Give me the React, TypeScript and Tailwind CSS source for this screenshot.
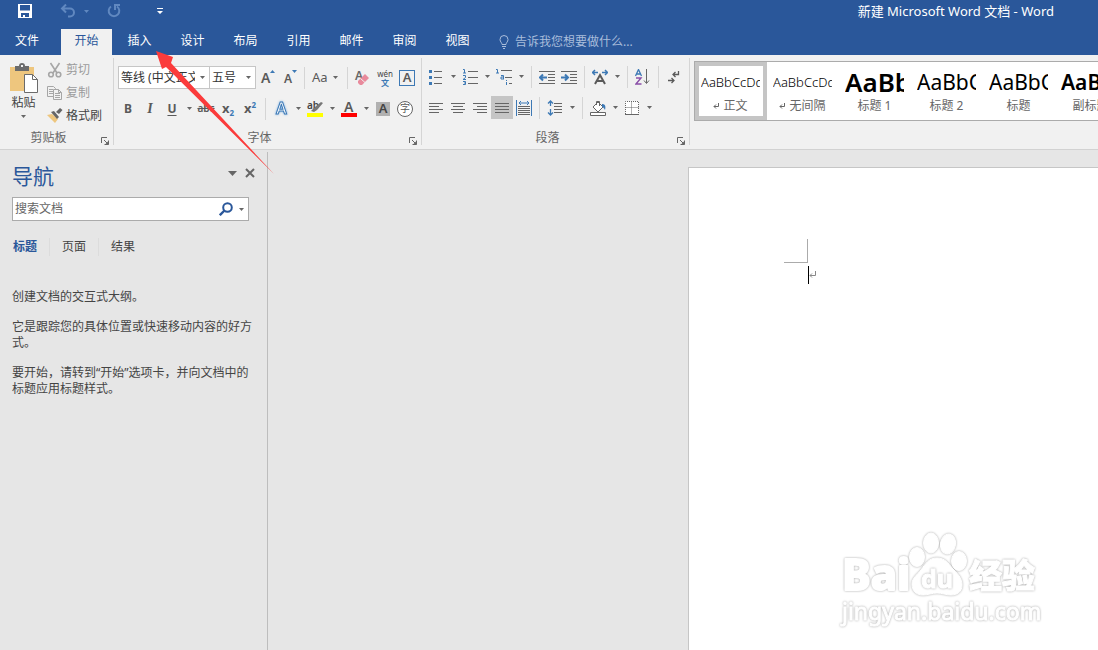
import type { ReactNode } from 'react'

const GREY = '#666666'
const BLUE = '#3d79b5'

const TABS = ['开始', '插入', '设计', '布局', '引用', '邮件', '审阅', '视图']

const STYLES = [
  { sample: 'AaBbCcDd', name: '正文', mark: true, look: 'text-[13px] font-light' },
  { sample: 'AaBbCcDd', name: '无间隔', mark: true, look: 'text-[13px] font-light' },
  { sample: 'AaBb', name: '标题 1', mark: false, look: 'text-[26px] font-semibold' },
  { sample: 'AaBbC', name: '标题 2', mark: false, look: 'text-[21px]' },
  { sample: 'AaBbC', name: '标题', mark: false, look: 'text-[21px]' },
  { sample: 'AaBbC', name: '副标题', mark: false, look: 'text-[21px] font-semibold' },
]

function Caret() {
  return (
    <svg width="5" height="3" viewBox="0 0 5 3" className="shrink-0">
      <path d="M0 0h5L2.5 3z" fill={GREY} />
    </svg>
  )
}

function Tool({ label, children, menu, active }: { label: string; children: ReactNode; menu?: boolean; active?: boolean }) {
  return (
    <button
      aria-label={label}
      className={active ? 'flex h-[23px] items-center bg-[#c5c5c5]' : 'flex h-[23px] items-center'}
    >
      <span className="flex w-[22px] items-center justify-center">{children}</span>
      {menu && (
        <span className="flex w-3 justify-center">
          <Caret />
        </span>
      )}
    </button>
  )
}

function Divider() {
  return <span className="mx-1 h-[22px] w-px bg-[#d5d5d5]" />
}

function Group({ title, children, className }: { title: string; children: ReactNode; className?: string }) {
  return (
    <section className="mb-1 mt-[3px] flex shrink-0 flex-col border-r border-[#d5d5d5]">
      <div className={className}>{children}</div>
      <div className="mt-auto flex h-[14px] items-center">
        <h2 className="flex-1 text-center text-[#666]">{title}</h2>
        <button aria-label={title + '选项'} className="flex h-full w-4 items-end justify-end pr-1">
          <svg width="8" height="8" viewBox="0 0 8 8" fill="none" stroke={GREY}>
            <path d="M.5 6V.5H6M3 3l3 3M7.5 3.500v4h-4" />
            <path d="M7.500 4v3.500H4z" fill={GREY} stroke="none" />
          </svg>
        </button>
      </div>
    </section>
  )
}

function Lines({ d, children }: { d: string; children?: ReactNode }) {
  return (
    <svg width="16" height="16" viewBox="0 0 16 16" fill="none" stroke={GREY}>
      <path d={d} />
      {children}
    </svg>
  )
}

function TitleBar() {
  return (
    <div className="flex h-[29px] items-start justify-between pl-[18px] pr-11 text-white">
      <div className="flex h-[22px] items-center">
        <button aria-label="保存">
          <svg width="14" height="14" viewBox="0 0 14 14">
            <path fillRule="evenodd" fill="#fff" d="M0 0h14v14H0zM2 1v5.500h10V1zM3 9v4h2v-2h2v2h4V9z" />
          </svg>
        </button>
        <button aria-label="撤消" className="ml-7 flex items-center gap-2">
          <svg width="16" height="14" viewBox="0 0 16 14" fill="none" stroke="#6088c0" strokeWidth="2">
            <path d="M6 .5L2 4.500l4 4M2 4.500h8a4 4 0 0 1 0 8H8" />
          </svg>
          <svg width="5" height="3" viewBox="0 0 5 3">
            <path d="M0 0h5L2.500 3z" fill="#6088c0" />
          </svg>
        </button>
        <button aria-label="重复" className="ml-[18px]">
          <svg width="14" height="14" viewBox="0 0 14 14" fill="none" stroke="#6088c0" strokeWidth="2">
            <path d="M4 2.500A5.300 5.300 0 1 0 10 2.500M8 6V1h5" />
          </svg>
        </button>
        <button aria-label="自定义快速访问工具栏" className="ml-9">
          <svg width="6" height="6" viewBox="0 0 6 6" fill="#fff">
            <path d="M0 0h6v1H0zM0 3h6L3 6z" />
          </svg>
        </button>
      </div>
      <h1 className="text-[13px] leading-[23px]">新建 Microsoft Word 文档 - Word</h1>
    </div>
  )
}

function TabBar() {
  return (
    <nav className="flex h-[26px] text-white">
      <button className="pb-[2px] pl-[15px] pr-[21px]">文件</button>
      {TABS.map((tab, i) => (
        <button
          key={tab}
          className={i === 0 ? 'mx-px w-[51px] bg-[#f1f1f1] pb-[2px] text-[#2a579a]' : 'mx-px w-[51px] pb-[2px]'}
        >
          {tab}
        </button>
      ))}
      <label className="ml-[15px] flex items-center gap-[6px]">
        <svg width="10" height="14" viewBox="0 0 10 14" fill="none" stroke="#a9bddb">
          <path d="M3 9.500C3 7.500 1 7 1 4.500a4 4 0 0 1 8 0C9 7 7 7.500 7 9.500zM3 11.500h4M4 13.500h2" />
        </svg>
        <input
          aria-label="告诉我您想要做什么"
          placeholder="告诉我您想要做什么..."
          className="w-40 bg-transparent outline-none placeholder:text-[#a9bddb]"
        />
      </label>
    </nav>
  )
}

function ClipboardGroup() {
  return (
    <Group title="剪贴板" className="flex pl-2">
      <button className="flex w-[31px] flex-col items-center pt-[5px] text-[#444]">
        <svg width="28" height="30" viewBox="0 0 28 30">
          <path d="M0 4h24v24H0z" fill="#eec67e" />
          <path d="M5 3h4a3 3 0 0 1 6 0h4v5H5z" fill="#6b6b6b" />
          <path d="M11 2h2v2h-2z" fill="#f1f1f1" />
          <path d="M14.500 11.500h8l5 5v13h-13z" fill="#fff" stroke="#6b6b6b" />
          <path d="M22.500 11.500v5h5" fill="none" stroke="#6b6b6b" />
        </svg>
        <span className="mb-1 mt-[2px] leading-4">粘贴</span>
        <Caret />
      </button>
      <div className="flex w-[74px] flex-col pl-2 text-[#9b9b9b]">
        <button disabled className="flex h-[23px] items-center gap-[3px]">
          <svg width="16" height="16" viewBox="0 0 16 16" fill="none" stroke="#a6a6a6" strokeWidth="1.600">
            <path d="M3.500 1l6.500 10M12.500 1L6 11" />
            <circle cx="4" cy="12.500" r="2.300" />
            <circle cx="11.500" cy="12.500" r="2.300" />
          </svg>
          剪切
        </button>
        <button disabled className="flex h-[23px] items-center gap-[3px]">
          <svg width="16" height="16" viewBox="0 0 16 16" fill="#f1f1f1" stroke="#a6a6a6">
            <path d="M.5 1.500h6l2 2v8h-8zM2 4.500h4M2 6.500h4M2 8.500h4" />
            <path d="M6.500 4.500h5l3 3v7h-8zM11.500 4.500v3h3M8 8.500h5M8 10.500h5M8 12.500h5" />
          </svg>
          复制
        </button>
        <button className="flex h-[23px] items-center gap-[3px] whitespace-nowrap text-[#444]">
          <svg width="16" height="16" viewBox="0 0 16 16">
            <path d="M0 7l5-1 6 5-3 4z" fill="#eec67e" />
            <path d="M4 4l3-1 5 6-2 2zM9 4l4-4 2.500 2L12 6z" fill="#666" />
          </svg>
          格式刷
        </button>
      </div>
    </Group>
  )
}

function FontGroup() {
  return (
    <Group title="字体" className="px-[3px] text-[#5a5a5a]">
      <div className="mt-2 flex h-[23px] items-center">
        <label className="relative ml-px flex">
          <select aria-label="字体" className="h-[23px] w-[92px] appearance-none border border-[#c6c6c6] bg-white pl-[2px] pr-[14px] text-[#333]">
            <option>等线 (中文正文)</option>
          </select>
          <span className="pointer-events-none absolute right-[5px] top-[10px] flex">
            <Caret />
          </span>
        </label>
        <label className="relative -ml-px flex">
          <select aria-label="字号" className="h-[23px] w-[47px] appearance-none border border-[#c6c6c6] bg-white pl-[2px] pr-[14px] text-[#333]">
            <option>五号</option>
          </select>
          <span className="pointer-events-none absolute right-[5px] top-[10px] flex">
            <Caret />
          </span>
        </label>
        <Tool label="增大字号">
          <svg width="16" height="16" viewBox="0 0 16 16" className="overflow-visible">
            <text x="2" y="13" fontSize="14" fontWeight="600" fill="#5a5a5a">A</text>
            <path d="M11 3h5l-2.500-3z" fill={BLUE} />
          </svg>
        </Tool>
        <Tool label="减小字号">
          <svg width="16" height="16" viewBox="0 0 16 16" className="overflow-visible">
            <text x="3" y="13" fontSize="12" fontWeight="600" fill="#5a5a5a">A</text>
            <path d="M11 0h5l-2.500 3z" fill={BLUE} />
          </svg>
        </Tool>
        <Divider />
        <button aria-label="更改大小写" className="flex w-[34px] items-center gap-[5px] pl-[3px]">
          <span className="text-[13px]">Aa</span>
          <Caret />
        </button>
        <Divider />
        <Tool label="清除格式">
          <svg width="16" height="16" viewBox="0 0 16 16" className="overflow-visible">
            <text x="0" y="10" fontSize="12" fontWeight="600" fill="#666">A</text>
            <path d="M3 11l7-7 4 4-7 7H5l-2-2z" fill="#e88a9c" />
            <path d="M5.500 8.500l4.500 4" stroke="#f1f1f1" />
          </svg>
        </Tool>
        <Tool label="拼音指南">
          <span className="flex flex-col items-center text-[8px] leading-[9px] text-[#444]">
            <span>wén</span>
            <span className="font-bold text-[#3d79b5]">文</span>
          </span>
        </Tool>
        <Tool label="字符边框">
          <span className="flex size-4 items-center justify-center border border-[#3d79b5] text-[13px] font-semibold">A</span>
        </Tool>
      </div>
      <div className="mt-2 flex h-[23px] items-center">
        <Tool label="加粗"><b>B</b></Tool>
        <Tool label="倾斜"><i className="font-['Liberation_Serif'] text-[14px] font-bold">I</i></Tool>
        <Tool label="下划线" menu><b className="underline underline-offset-2">U</b></Tool>
        <Tool label="删除线"><span className="text-[10px] font-semibold line-through">abc</span></Tool>
        <Tool label="下标">
          <b className="text-[13px]">x</b>
          <span className="pt-2 text-[8px] font-bold text-[#3d79b5]">2</span>
        </Tool>
        <Tool label="上标">
          <b className="text-[13px]">x</b>
          <span className="pb-2 text-[8px] font-bold text-[#3d79b5]">2</span>
        </Tool>
        <Divider />
        <Tool label="文本效果" menu>
          <svg width="16" height="18" viewBox="0 0 16 18" className="overflow-visible">
            <text
              x="3"
              y="14"
              fontSize="16"
              fontWeight="600"
              fill="#fff"
              stroke={BLUE}
              className="drop-shadow-[0_0_1px_#7fb2e5]"
            >
              A
            </text>
          </svg>
        </Tool>
        <Tool label="突出显示" menu>
          <svg width="16" height="18" viewBox="0 0 16 18" className="overflow-visible">
            <text x="0" y="9" fontSize="10" fontWeight="600" fill="#444">ab</text>
            <path d="M4 11l4-4 6-5 2 1-6 7-3 2z" fill="#777" />
            <path d="M0 13h16v4H0z" fill="#ff0" />
          </svg>
        </Tool>
        <Tool label="字体颜色" menu>
          <svg width="16" height="18" viewBox="0 0 16 18" className="overflow-visible">
            <text x="3" y="12" fontSize="14" fontWeight="600" fill="#5a5a5a">A</text>
            <path d="M0 13h16v4H0z" fill="#f00" />
          </svg>
        </Tool>
        <Tool label="字符底纹">
          <span className="flex size-[14px] items-center justify-center bg-[#b1b1b1] text-[13px] font-semibold text-[#444]">A</span>
        </Tool>
        <Tool label="带圈字符">
          <span className="flex size-4 items-center justify-center rounded-full border border-[#666] bg-white text-[10px]">字</span>
        </Tool>
      </div>
    </Group>
  )
}

function ParagraphGroup() {
  return (
    <Group title="段落" className="pl-[3px] pr-1">
      <div className="mt-[7px] flex h-[23px] items-center">
        <Tool label="项目符号" menu>
          <Lines d="M6 2.500h8M6 8.500h8M6 14.500h8">
            <path d="M1 1h3v3H1zM1 7h3v3H1zM1 13h3v3H1z" fill={BLUE} stroke="none" />
          </Lines>
        </Tool>
        <Tool label="编号" menu>
          <Lines d="M6 2.500h10M6 8.500h10M6 14.500h10">
            <path d="M1 .5h1.500v3.500M1 4h3M1 6.500h2.500v2L1 10.500h3M1 12.500h2.500v3H1M2 14h2" stroke={BLUE} />
          </Lines>
        </Tool>
        <Tool label="多级列表" menu>
          <Lines d="M5 1.500h11M9 8.500h7M13 14.500h3">
            <path d="M0 .5h1.500V4M0 4h3M5 6.500h2.500V10M7.500 8H5v2h3M10.500 11v1M10.500 13v3" stroke={BLUE} />
          </Lines>
        </Tool>
        <Divider />
        <Tool label="减少缩进量">
          <Lines d="M0 2.500h16M9 5.500h7M9 8.500h7M9 11.500h7M0 14.500h16">
            <path d="M8 8.500H1M4 5.500l-3 3 3 3" stroke={BLUE} strokeWidth="2" />
          </Lines>
        </Tool>
        <Tool label="增加缩进量">
          <Lines d="M0 2.500h16M9 5.500h7M9 8.500h7M9 11.500h7M0 14.500h16">
            <path d="M0 8.500h6M4 5.500l3 3-3 3" stroke={BLUE} strokeWidth="2" />
          </Lines>
        </Tool>
        <Divider />
        <Tool label="中文版式" menu>
          <Lines d="">
            <path d="M3 15L8 6l5 9M5 12h6" stroke="#5a5a5a" strokeWidth="2" />
            <path d="M0 3.500h6M10 3.500h6M3 1L.5 3.500 3 6M13 1l2.500 2.500L13 6" stroke={BLUE} strokeWidth="1.500" />
          </Lines>
        </Tool>
        <Divider />
        <Tool label="排序">
          <Lines d="M11.500 0v14M9 11.500l2.500 3 2.500-3">
            <path d="M.5 7L3.500.5l3 6.500M1.500 5h4" stroke={BLUE} strokeWidth="1.300" />
            <path d="M1 9h5l-5 6h5.500" stroke="#8a4fa8" strokeWidth="1.400" />
          </Lines>
        </Tool>
        <Divider />
        <Tool label="显示编辑标记">
          <svg width="12" height="14" viewBox="0 0 12 14" fill="none" stroke="#5a5a5a" strokeWidth="1.300">
            <path d="M10.500 1v3.500H5M7.500 2L5 4.500 7.500 7M0 10.500h5.500M3.500 8L6 10.500 3.500 13" />
          </svg>
        </Tool>
      </div>
      <div className="mt-2 flex h-[23px] items-center">
        <Tool label="左对齐"><Lines d="M1 3.500h14M1 6.500h10M1 9.500h14M1 12.500h10" /></Tool>
        <Tool label="居中"><Lines d="M1 3.500h14M3 6.500h10M1 9.500h14M3 12.500h10" /></Tool>
        <Tool label="右对齐"><Lines d="M1 3.500h14M5 6.500h10M1 9.500h14M5 12.500h10" /></Tool>
        <Tool label="两端对齐" active><Lines d="M1 3.500h14M1 6.500h14M1 9.500h14M1 12.500h14" /></Tool>
        <Tool label="分散对齐">
          <Lines d="M2 6.500h12M2 8.500h12M2 10.500h12M2 12.500h12M2 14.500h12">
            <path d="M.5 0v16M15.500 0v16M3 3h10M5 1L3 3l2 2M11 1l2 2-2 2" stroke={BLUE} />
          </Lines>
        </Tool>
        <Divider />
        <Tool label="行距" menu>
          <Lines d="M7 3.500h8M7 6.500h8M7 9.500h8M7 12.500h8">
            <path d="M3.500 1v5M3.500 9v6M1 3.500L3.500 1 6 3.500M1 12.500L3.500 15 6 12.500" stroke={BLUE} strokeWidth="1.300" />
          </Lines>
        </Tool>
        <Divider />
        <Tool label="底纹" menu>
          <svg width="16" height="16" viewBox="0 0 16 16" fill="#fff" stroke={GREY}>
            <path d="M3 7l5-5 5 5-5 5zM6.500 5V1.500h3V6" />
            <path d="M12 4c3 0 4 2 3 6-1-2-2-3-3-3z" fill={BLUE} stroke="none" />
            <path d="M.5 12.500h15v3H.5z" />
          </svg>
        </Tool>
        <Tool label="边框" menu>
          <svg width="14" height="14" viewBox="0 0 14 14" fill="#fff" stroke={GREY}>
            <path d="M.5 13V.5h13V13M6.500 .5V13M.5 6.500h13" strokeDasharray="1 1" />
            <path d="M0 13.500h14" />
          </svg>
        </Tool>
      </div>
    </Group>
  )
}

function StyleGallery() {
  return (
    <div className="ml-1 mt-[6px] flex h-[60px] min-w-0 flex-1 overflow-hidden border border-r-0 border-[#ababab] bg-white">
      {STYLES.map((style, i) => (
        <button
          key={style.name}
          className={
            i === 0
              ? 'flex h-[58px] w-[72px] shrink-0 flex-col border-4 border-[#c5c5c5] pl-[2px] pr-[3px]'
              : 'flex h-[58px] w-[72px] shrink-0 flex-col border-4 border-transparent pl-[2px] pr-[3px]'
          }
        >
          <span className="flex h-8 w-full items-center overflow-hidden leading-8 text-black">
            <span className={style.look}>{style.sample}</span>
          </span>
          <span className="flex w-full items-center justify-center gap-1 whitespace-nowrap leading-4 text-[#666]">
            {style.mark && (
              <svg width="6" height="6" viewBox="0 0 6 6" fill="none" stroke="#666">
                <path d="M5.500 0v3.500H1M3 1.500l-2 2 2 2" />
              </svg>
            )}
            {style.name}
          </span>
        </button>
      ))}
    </div>
  )
}

function NavigationPane() {
  return (
    <aside className="mt-[2px] flex w-[268px] shrink-0 flex-col border-r border-[#bdbdbd] pl-3 text-[#444]">
      <div className="flex items-center justify-between pr-3 pt-[9px]">
        <h2 className="text-[21px] leading-[30px] text-[#2a579a]">导航</h2>
        <div className="flex items-center gap-2 pb-[6px]">
          <button aria-label="任务窗格选项">
            <svg width="9" height="5" viewBox="0 0 9 5">
              <path d="M0 0h9L4.500 5z" fill={GREY} />
            </svg>
          </button>
          <button aria-label="关闭">
            <svg width="10" height="10" viewBox="0 0 10 10" stroke={GREY} strokeWidth="2">
              <path d="M1 1l8 8M9 1L1 9" />
            </svg>
          </button>
        </div>
      </div>
      <div className="mr-[18px] mt-[6px] flex h-6 items-center border border-[#ababab] bg-white pr-1">
        <input aria-label="搜索文档" placeholder="搜索文档" className="min-w-0 flex-1 pl-[2px] outline-none placeholder:text-[#666]" />
        <button aria-label="搜索">
          <svg width="14" height="14" viewBox="0 0 14 14" fill="none" stroke="#2a579a" strokeWidth="2">
            <circle cx="8.500" cy="5.500" r="4.300" />
            <path d="M5.500 8.500L.8 13.200" strokeWidth="2.400" />
          </svg>
        </button>
        <button aria-label="搜索选项" className="ml-[6px]">
          <Caret />
        </button>
      </div>
      <div className="mt-[17px] flex h-[18px] items-center pl-px">
        <button className="w-9 text-left font-bold text-[#2a579a]">标题</button>
        <button className="w-[49px] border-l border-[#dcdcdc]">页面</button>
        <button className="w-[49px] border-l border-[#dcdcdc]">结果</button>
      </div>
      <div className="mt-[33px] flex flex-col gap-[14px] pr-[14px] leading-4">
        <p>创建文档的交互式大纲。</p>
        <p>它是跟踪您的具体位置或快速移动内容的好方式。</p>
        <p>要开始，请转到“开始”选项卡，并向文档中的标题应用标题样式。</p>
      </div>
    </aside>
  )
}

function Watermark() {
  return (
    <svg
      className="absolute bottom-5 right-14"
      width="204"
      height="104"
      viewBox="0 0 204 104"
      fill="#fff"
      stroke="#fff"
      strokeLinejoin="round"
    >
      <text x="4" y="64" fontSize="43" fontWeight="800" strokeWidth="2" className="drop-shadow-[0_0_1px_#a8a8a8]">
        Bai
      </text>
      <text
        x="131"
        y="62"
        fontSize="33"
        strokeWidth="1"
        className="font-['Noto_Sans_CJK_SC'] font-black drop-shadow-[0_0_1px_#a8a8a8]"
      >
        经验
      </text>
      <g className="drop-shadow-[0_0_1px_#a8a8a8]">
        <path d="M99 32c8 0 11 5 16 11 6 6 9 10 9 16 0 7-5 10-11 10-5 0-9-2-14-2s-9 2-14 2c-7 0-11-4-11-11 0-6 5-9 9-14 5-7 8-12 16-12z" />
        <ellipse cx="79" cy="31" rx="7.500" ry="9.500" />
        <ellipse cx="93" cy="17" rx="7.500" ry="10" />
        <ellipse cx="110" cy="18" rx="7.500" ry="10" transform="rotate(12 110 18)" />
        <ellipse cx="121" cy="35" rx="7.500" ry="9.500" />
      </g>
      <text x="83" y="62" fontSize="25" fontWeight="700" className="drop-shadow-[0_0_1px_#a8a8a8]">
        du
      </text>
      <text x="4" y="94" fontSize="23" className="drop-shadow-[0_0_1px_#a8a8a8]">
        jingyan.baidu.com
      </text>
    </svg>
  )
}

export default function App() {
  return (
    <div
      lang="zh-CN"
      className="relative flex min-h-screen flex-col overflow-hidden bg-[#e6e6e6] font-['Noto_Sans','Noto_Sans_CJK_SC',sans-serif] text-[12px]"
    >
      <header className="bg-[#2a579a]">
        <TitleBar />
        <TabBar />
      </header>

      <div className="flex h-[95px] border-b border-[#d2d2d2] bg-[#f1f1f1]">
        <ClipboardGroup />
        <FontGroup />
        <ParagraphGroup />
        <StyleGallery />
      </div>

      <div className="flex flex-1">
        <NavigationPane />
        <main className="flex flex-1 pl-[420px] pt-[17px]">
          <article className="flex-1 border-l border-t border-[#c6c6c6] bg-white pl-[95px] pt-[71px]">
            <div className="size-6 border-b border-r border-[#ababab]" />
            <div className="flex items-center pl-6 pt-[3px]">
              <span className="h-[18px] w-px bg-black" />
              <svg width="7" height="8" viewBox="0 0 7 8" fill="none" stroke="#888">
                <path d="M6.500 0v4.500H1M3 2.500l-2 2 2 2" />
              </svg>
            </div>
          </article>
        </main>
      </div>

      <Watermark />

      {/* pointer to the insert tab */}
      <svg className="pointer-events-none absolute left-[156px] top-[51px]" width="119" height="124" viewBox="0 0 119 124">
        <path d="M0 0l17 6-2 6 103 111L10 16l-4 2z" fill="#fb3b3b" />
      </svg>
    </div>
  )
}
